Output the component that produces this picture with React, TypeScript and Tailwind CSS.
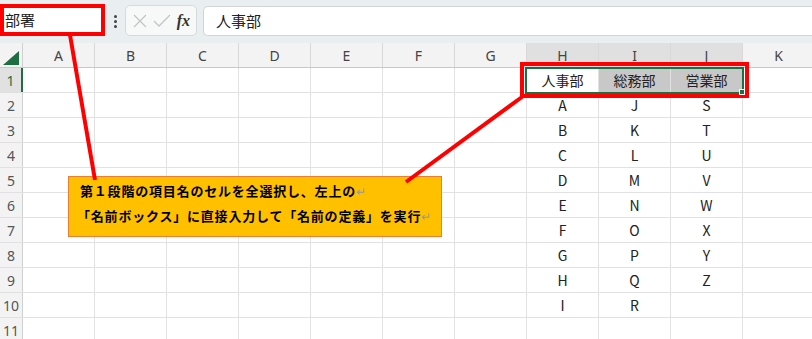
import React from "react";

const COLS = ["A", "B", "C", "D", "E", "F", "G", "H", "I", "J", "K"];
const H = ["A", "B", "C", "D", "E", "F", "G", "H", "I"];
const I = ["J", "K", "L", "M", "N", "O", "P", "Q", "R"];
const J = ["S", "T", "U", "V", "W", "X", "Y", "Z"];

const jp = { fontFamily: '"Noto Sans CJK JP", "Noto Sans", sans-serif' };
const ui = { fontFamily: '"Noto Sans", "Noto Sans CJK JP", sans-serif' };

function cellContent(r: number, c: number): string {
  if (r === 1) {
    if (c === 7) return "人事部";
    if (c === 8) return "総務部";
    if (c === 9) return "営業部";
    return "";
  }
  const i = r - 2;
  if (c === 7) return H[i] ?? "";
  if (c === 8) return I[i] ?? "";
  if (c === 9) return J[i] ?? "";
  return "";
}

export default function App() {
  const rows = Array.from({ length: 11 }, (_, i) => i + 1);
  return (
    <div className="relative w-[812px] h-[339px] overflow-hidden bg-white" style={ui}>
      {/* Top bar */}
      <div className="flex h-[43px] bg-[#e9eef0] items-start">
        <div className="mt-[4px] w-[105px] h-[32px] border-[4px] border-[#ff0000] bg-white flex items-center pl-[1px] text-[15px] text-[#222]" style={jp}>
          部署
        </div>
        <div className="w-[20px] h-[40px] flex flex-col items-center justify-center gap-[2px] pt-[2px]">
          <span className="w-[3px] h-[3px] bg-[#444] rounded-full" />
          <span className="w-[3px] h-[3px] bg-[#444] rounded-full" />
          <span className="w-[3px] h-[3px] bg-[#444] rounded-full" />
        </div>
        <div className="mt-[5px] w-[72px] h-[31px] rounded-[5px] border border-[#d6dadb] bg-[#f7f9f9] flex items-center justify-between px-[6px]">
          <svg width="16" height="16" viewBox="0 0 16 16">
            <path d="M2 2 L14 14 M14 2 L2 14" stroke="#c4c4c4" strokeWidth="1.3" fill="none" />
          </svg>
          <svg width="18" height="16" viewBox="0 0 18 16">
            <path d="M1 8 L6 13 L17 2" stroke="#c4c4c4" strokeWidth="1.3" fill="none" />
          </svg>
          <span className="text-[16px] italic font-bold text-[#333] leading-none" style={{ fontFamily: '"Liberation Serif", serif' }}>
            fx
          </span>
        </div>
        <div className="mt-[6px] ml-[6px] flex-1 h-[30px] rounded-l-[5px] border border-r-0 border-[#d0d4d5] bg-white flex items-center pl-[12px] text-[15px] text-[#222]" style={jp}>
          人事部
        </div>
      </div>

      {/* Column headers */}
      <div className="flex h-[25px] bg-[#f3f3f3] border-b border-[#c8c8c8]">
        <div className="w-[23px] shrink-0 border-r border-[#d0d0d0] relative">
          <svg className="absolute left-[3px] top-[8px]" width="16" height="14" viewBox="0 0 16 14">
            <path d="M16 0 L16 14 L0 14 Z" fill="#1e6e42" />
          </svg>
        </div>
        {COLS.map((c, i) => (
          <div
            key={c}
            className={`w-[72px] shrink-0 border-r border-[#d8d8d8] flex items-center justify-center text-[14px] text-[#444] ${
              i >= 7 && i <= 9 ? "bg-[#e0e0e0]" : ""
            }`}
          >
            {c}
          </div>
        ))}
      </div>

      {/* Rows */}
      {rows.map((r) => (
        <div key={r} className="flex h-[25px] border-b border-[#e1e1e1]">
          <div
            className={`w-[23px] shrink-0 flex items-center justify-center text-[14px] ${
              r === 1
                ? "bg-[#e1e1e1] border-r-[2px] border-[#1e6e42] text-[#1e6e42]"
                : "bg-[#f3f3f3] border-r border-[#d0d0d0] text-[#555]"
            }`}
          >
            {r}
          </div>
          {COLS.map((c, ci) => {
            const fill = r === 1 && (ci === 8 || ci === 9) ? "bg-[#c8c8c8]" : "";
            return (
              <div
                key={c}
                className={`w-[72px] shrink-0 border-r border-[#e1e1e1] flex items-center justify-center text-[14px] text-[#222] ${fill}`}
                style={jp}
              >
                {cellContent(r, ci)}
              </div>
            );
          })}
        </div>
      ))}

      {/* Selection H1:J1 */}
      <div className="absolute left-[520px] top-[62px] w-[229px] h-[36px] border-[4px] border-[#ff0000] pointer-events-none" />
      <div className="absolute left-[525px] top-[67px] w-[219px] h-[27px] border-[2px] border-[#1e6e42] pointer-events-none" />
      <div className="absolute left-[739px] top-[89px] w-[6px] h-[6px] bg-[#1e6e42] border border-white pointer-events-none" />

      {/* Callout */}
      <div
        className="absolute left-[68px] top-[176px] w-[374px] h-[61px] bg-[#ffc000] border border-[#ed7d31] pl-[11px] pt-[1px] text-[13px] font-bold text-black tracking-[0.8px] leading-[25px]"
        style={jp}
      >
        <div>
          第１段階の項目名のセルを全選択し、左上の<span className="text-[#9a9a9a] font-normal text-[12px]">↵</span>
        </div>
        <div className="-ml-[3px]">
          「名前ボックス」に直接入力して「名前の定義」を実行<span className="text-[#9a9a9a] font-normal text-[12px]">↵</span>
        </div>
      </div>

      {/* Red leader lines */}
      <svg className="absolute inset-0 pointer-events-none" width="812" height="339">
        <line x1="70" y1="35" x2="95" y2="180" stroke="#ff0000" strokeWidth="4" />
        <line x1="406" y1="182" x2="522" y2="97" stroke="#ff0000" strokeWidth="4" />
      </svg>
    </div>
  );
}
